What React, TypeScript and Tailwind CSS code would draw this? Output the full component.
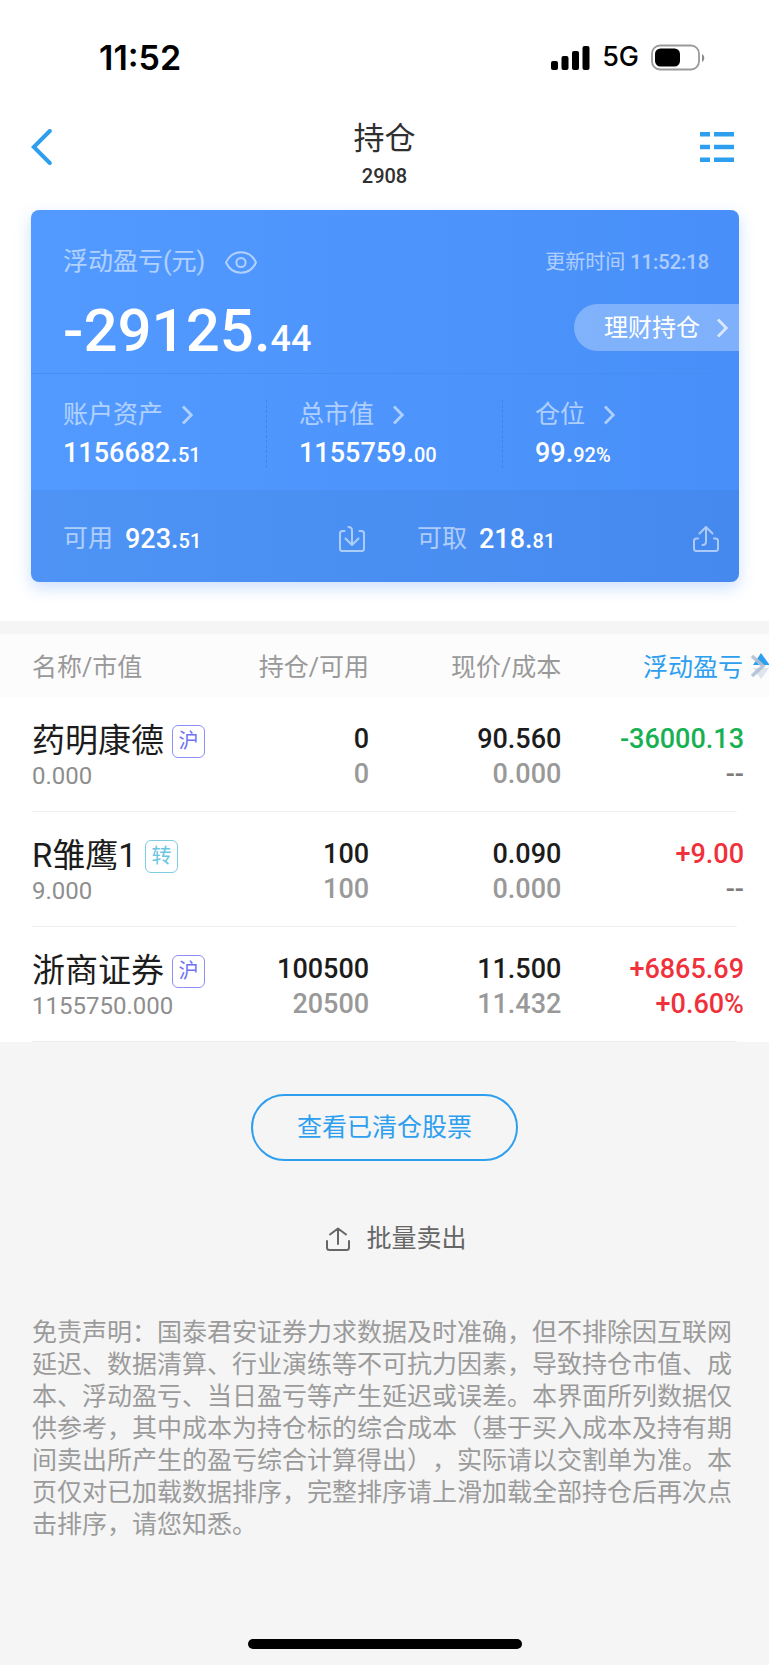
import React from 'react';

interface Holding {
  name: string;
  tag: string;
  tagClass: string;
  marketValue: string;
  position: string;
  available: string;
  price: string;
  cost: string;
  profit: string;
  rate: string;
  profitClass: string;
  rateClass: string;
}

const RED = 'text-[#f0303a]';
const GREEN = 'text-[#17b052]';
const GRAY = 'text-[#7d7d7d]';
const TAG_HU = 'text-[#6e72f5] border-[#8d90f7]';
const TAG_ZHUAN = 'text-[#6cc5e2] border-[#7fcce5]';

const holdings: Holding[] = [
  {
    name: '药明康德',
    tag: '沪',
    tagClass: TAG_HU,
    marketValue: '0.000',
    position: '0',
    available: '0',
    price: '90.560',
    cost: '0.000',
    profit: '-36000.13',
    rate: '--',
    profitClass: GREEN,
    rateClass: GRAY,
  },
  {
    name: 'R雏鹰1',
    tag: '转',
    tagClass: TAG_ZHUAN,
    marketValue: '9.000',
    position: '100',
    available: '100',
    price: '0.090',
    cost: '0.000',
    profit: '+9.00',
    rate: '--',
    profitClass: RED,
    rateClass: GRAY,
  },
  {
    name: '浙商证券',
    tag: '沪',
    tagClass: TAG_HU,
    marketValue: '1155750.000',
    position: '100500',
    available: '20500',
    price: '11.500',
    cost: '11.432',
    profit: '+6865.69',
    rate: '+0.60%',
    profitClass: RED,
    rateClass: RED,
  },
];

const assets = [
  { label: '账户资产', whole: '1156682.', fraction: '51' },
  { label: '总市值', whole: '1155759.', fraction: '00' },
  { label: '仓位', whole: '99.', fraction: '92%' },
];

const Chevron: React.FC = () => (
  <svg width="12" height="20" viewBox="0 0 12 20" fill="none" stroke="currentColor" strokeWidth="2.8">
    <path d="M2 1.5 10.3 10 2 18.5" />
  </svg>
);

const Amount: React.FC<{ whole: string; fraction: string }> = ({ whole, fraction }) => (
  <span className="text-[27px] leading-[30px] font-medium text-white">
    {whole}
    <span className="text-xl leading-none">{fraction}</span>
  </span>
);

const StatusBar: React.FC = () => (
  <div className="flex h-[114px] items-center justify-between pr-16 pl-[99px] font-['Inter',sans-serif] text-black">
    <span className="text-[34px] font-semibold">11:52</span>
    <div className="flex items-center gap-3">
      <svg width="39" height="25" viewBox="0 0 39 25" fill="currentColor">
        <rect x="0" y="16" width="7" height="9" rx="2" />
        <rect x="10.5" y="11" width="7" height="14" rx="2" />
        <rect x="21" y="6" width="7" height="19" rx="2" />
        <rect x="31.5" y="1" width="7" height="24" rx="2" />
      </svg>
      <span className="text-[27px] font-medium">5G</span>
      <svg width="54" height="27" viewBox="0 0 54 27" fill="none">
        <rect x="1" y="1.5" width="47" height="24" rx="8" stroke="#9a9a9a" strokeWidth="1.8" />
        <rect x="4" y="4.5" width="25" height="18" rx="5.5" fill="#000" />
        <path d="M51 10v8c3-1.400 3-6.600 0-8Z" fill="#8a8a8a" />
      </svg>
    </div>
  </div>
);

const NavBar: React.FC = () => (
  <header className="flex items-center justify-between pr-[35px] pl-[31px] text-[#2e9fee]">
    <button aria-label="返回" className="w-11 pb-2">
      <svg width="21" height="36" viewBox="0 0 21 36" fill="none" stroke="currentColor" strokeWidth="4" strokeLinecap="round">
        <path d="M18.800 2 2.800 18l16 16" />
      </svg>
    </button>
    <div className="flex flex-col items-center text-[#303030]">
      <h1 className="text-[31px] leading-[50px]">持仓</h1>
      <span className="text-xl leading-6 font-medium">2908</span>
    </div>
    <button aria-label="菜单" className="flex w-10 justify-end pb-2">
      <svg width="34" height="30" viewBox="0 0 34 30" fill="currentColor">
        <path d="M0 0h10v4.500H0zM14 0h20v4.500H14zM0 12.800h10v4.500H0zM14 12.800h20v4.500H14zM0 25.500h10V30H0zM14 25.500h20V30H14z" />
      </svg>
    </button>
  </header>
);

const SummaryCard: React.FC = () => (
  <section className="mt-[22px] mr-[30px] mb-[39px] ml-[31px] overflow-hidden rounded-lg bg-linear-to-r from-[#529aff] to-[#488ff9] shadow-[0_6px_16px_rgba(74,144,250,0.28)]">
    <div className="border-b border-[#468ef0] pt-[34px] pb-[15px] pl-8">
      <div className="flex h-9 items-center justify-between pr-[30px] text-white/55">
        <div className="flex items-center gap-5">
          <span className="text-[25px]">浮动盈亏(元)</span>
          <button aria-label="隐藏金额">
            <svg width="32" height="23" viewBox="0 0 32 23" fill="none" stroke="currentColor" strokeWidth="2">
              <path d="M1 11.500C4 5 9.500 1.200 16 1.200S28 5 31 11.500C28 18 22.500 21.800 16 21.800S4 18 1 11.500Z" strokeLinejoin="round" />
              <circle cx="16" cy="11.500" r="4.600" />
            </svg>
          </button>
        </div>
        <span className="text-xl">
          更新时间 <span className="font-medium">11:52:18</span>
        </span>
      </div>
      <div className="mt-6 flex items-start justify-between">
        <span className="text-[60px] leading-[54px] font-medium text-white">
          -29125.<span className="text-4xl leading-none">44</span>
        </span>
        <button className="flex h-[47px] items-center gap-4 rounded-l-full bg-white/30 pr-[11px] pl-[30px] text-2xl text-white">
          理财持仓
          <span className="text-white/70">
            <Chevron />
          </span>
        </button>
      </div>
    </div>
    <div className="grid grid-cols-3 pt-[26px] pb-[22px]">
      {assets.map(asset => (
        <div
          key={asset.label}
          className="flex flex-col items-start gap-2 border-r border-dashed border-[#3f86e6] pl-8 last:border-r-0"
        >
          <button className="flex items-center gap-[18px] text-[25px] leading-[30px] text-white/55">
            {asset.label}
            <Chevron />
          </button>
          <Amount whole={asset.whole} fraction={asset.fraction} />
        </div>
      ))}
    </div>
    <div className="grid grid-cols-2 bg-black/4 pt-[34px] pb-7 text-white/55">
      <div className="flex items-center justify-between pr-5 pl-8">
        <span className="flex items-center gap-3 text-[25px] leading-[30px]">
          可用
          <Amount whole="923." fraction="51" />
        </span>
        <button aria-label="转入">
          <svg width="26" height="26" viewBox="0 0 26 26" fill="none" stroke="currentColor" strokeWidth="2" strokeLinecap="round" strokeLinejoin="round">
            <path d="M5.500 5H3.500C2 5 1 6 1 7.500v15C1 24 2 25 3.500 25h19c1.500 0 2.500-1 2.500-2.500v-15C25 6 24 5 22.500 5h-2" />
            <path d="M9.500 1c2.500 0 3.500 1.500 3.500 3.500v14M6.500 12.500l6.500 6.500 6.500-6.500" />
          </svg>
        </button>
      </div>
      <div className="flex items-center justify-between pr-5 pl-8">
        <span className="flex items-center gap-3 text-[25px] leading-[30px]">
          可取
          <Amount whole="218." fraction="81" />
        </span>
        <button aria-label="转出">
          <svg width="26" height="26" viewBox="0 0 26 26" fill="none" stroke="currentColor" strokeWidth="2" strokeLinecap="round" strokeLinejoin="round">
            <path d="M5 12.500H3.500C2 12.500 1 13.500 1 15v7.500C1 24 2 25 3.500 25h19c1.500 0 2.500-1 2.500-2.500V15c0-1.500-1-2.500-2.500-2.500H21" />
            <path d="M9.500 19c2.500 0 3.500-1.500 3.500-3.500V1.500M6.500 7.500 13 1l6.500 6.500" />
          </svg>
        </button>
      </div>
    </div>
  </section>
);

const HoldingsTable: React.FC = () => (
  <table className="w-full table-fixed bg-white">
    <thead>
      <tr className="h-[63px] bg-[#fcfcfc] text-[25px] text-[#999]">
        <th className="w-[32%] pt-1 pl-8 text-left font-normal">名称/市值</th>
        <th className="w-[16%] pt-1 text-right font-normal whitespace-nowrap">持仓/可用</th>
        <th className="w-[25%] pt-1 text-right font-normal">现价/成本</th>
        <th className="w-[27%] pt-1 font-normal text-[#2e9fee]">
          <button className="flex w-full items-center justify-end gap-2">
            浮动盈亏
            <svg width="18" height="32" viewBox="0 0 18 32" fill="none">
              <path d="M2 13 10 1l8 11v1Z" fill="#2e9fee" />
              <path d="M2 16h16l-8 11Z" fill="#dde6ee" />
              <path d="m1 4 11 10L1 24" stroke="#b3bfd3" strokeWidth="3.500" strokeOpacity=".9" />
            </svg>
          </button>
        </th>
      </tr>
    </thead>
    <tbody>
      {holdings.map(item => (
        <tr
          key={item.name}
          className="h-[115px] bg-[linear-gradient(#ededed,#ededed)] bg-[length:calc(100%-64px)_1px] bg-bottom bg-no-repeat align-top text-[27px] leading-[35px] font-medium text-[#1c1c1c]"
        >
          <td className="pt-[26px] pl-8">
            <div className="flex items-center gap-2">
              <span className="text-[33px] leading-9 font-normal whitespace-nowrap">{item.name}</span>
              <span
                className={`flex size-[33px] items-center justify-center rounded-md border text-xl leading-none font-normal ${item.tagClass}`}
              >
                {item.tag}
              </span>
            </div>
            <div className="text-2xl leading-[34px] font-normal text-[#8e8e8e]">{item.marketValue}</div>
          </td>
          <td className="pt-[25px] text-right">
            <div>{item.position}</div>
            <div className="text-[#999]">{item.available}</div>
          </td>
          <td className="pt-[25px] text-right">
            <div>{item.price}</div>
            <div className="text-[#999]">{item.cost}</div>
          </td>
          <td className="pt-[25px] pr-[25px] text-right">
            <div className={item.profitClass}>{item.profit}</div>
            <div className={item.rateClass}>{item.rate}</div>
          </td>
        </tr>
      ))}
    </tbody>
  </table>
);

const App: React.FC = () => {
  return (
    <div className="flex min-h-screen flex-col bg-[#f5f5f5] font-['Roboto','Noto_Sans_CJK_SC',sans-serif]">
      <div className="bg-white">
        <StatusBar />
        <NavBar />
        <div className="flow-root border-b-[13px] border-[#f5f5f5]">
          <SummaryCard />
        </div>
        <HoldingsTable />
      </div>
      <div className="flex flex-col items-center pt-[52px]">
        <button className="h-[67px] rounded-full border-2 border-[#2e9fee] px-11 text-[25px] text-[#2e9fee]">
          查看已清仓股票
        </button>
        <button className="mt-[58px] flex items-center gap-4 pl-6 text-[25px] leading-10 text-[#666]">
          <svg width="24" height="24" viewBox="0 0 24 24" fill="none" stroke="currentColor" strokeWidth="2" strokeLinecap="round" strokeLinejoin="round">
            <path d="M1 14v6.500C1 22 2 23 3.500 23h17c1.500 0 2.500-1 2.500-2.500V14M12 17V1.500M4 7.500l8-6 8 6" />
          </svg>
          批量卖出
        </button>
      </div>
      <p className="mt-[58px] px-8 text-[25px] leading-8 text-[#9b9b9b] [text-spacing-trim:space-all]">
        免责声明：国泰君安证券力求数据及时准确，但不排除因互联网延迟、数据清算、行业演练等不可抗力因素，导致持仓市值、成本、浮动盈亏、当日盈亏等产生延迟或误差。本界面所列数据仅供参考，其中成本为持仓标的综合成本（基于买入成本及持有期间卖出所产生的盈亏综合计算得出），实际请以交割单为准。本页仅对已加载数据排序，完整排序请上滑加载全部持仓后再次点击排序，请您知悉。
      </p>
      <div className="mx-auto mt-auto mb-4 h-[10px] w-[274px] rounded-full bg-black" />
    </div>
  );
};

export default App;
